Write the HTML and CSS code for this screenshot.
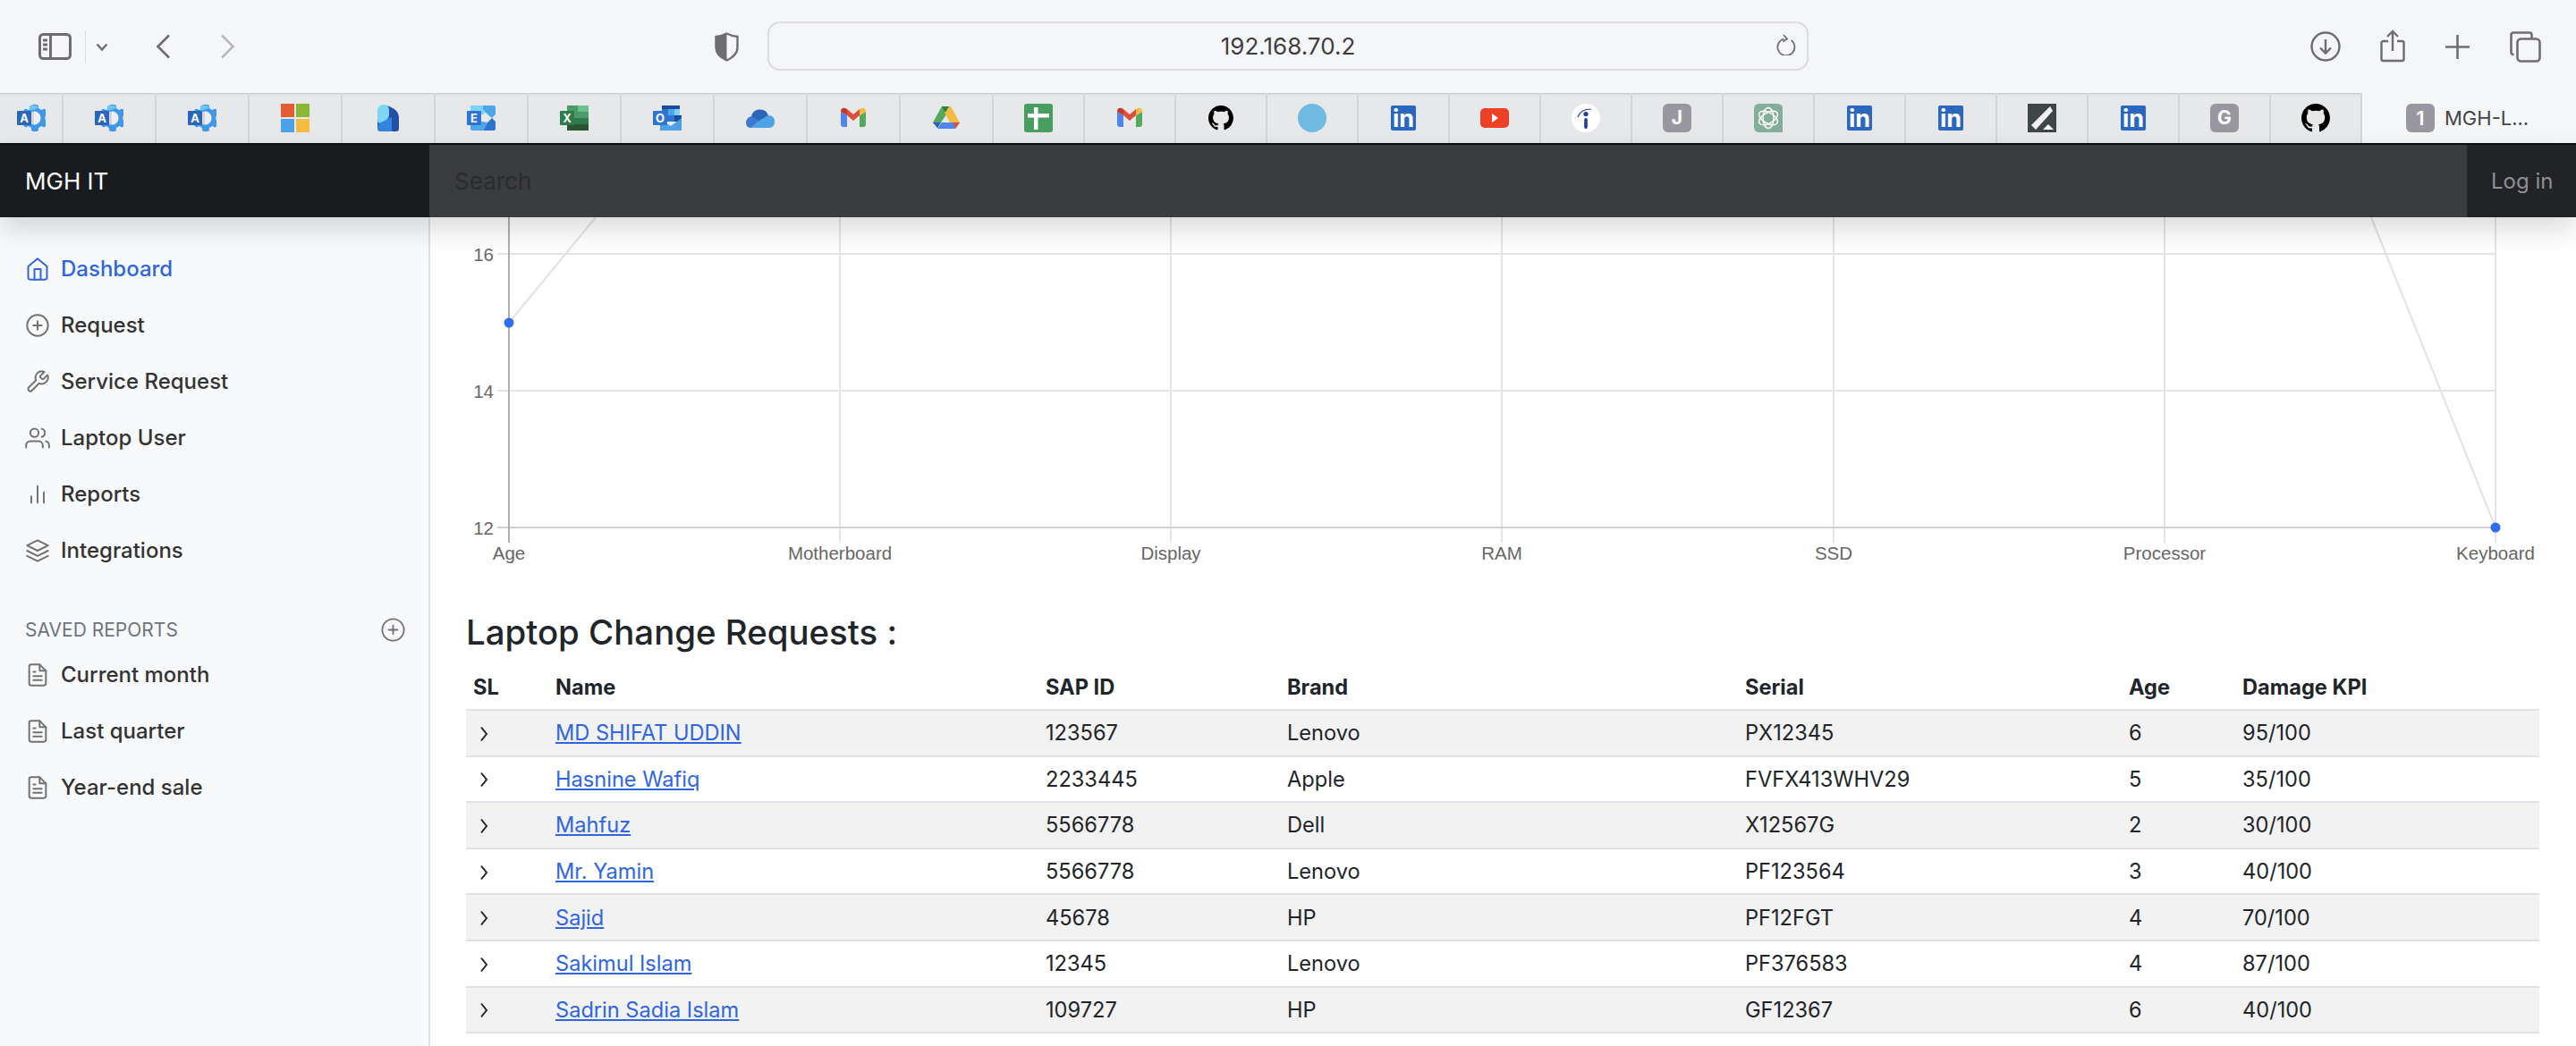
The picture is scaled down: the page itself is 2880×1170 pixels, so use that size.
FILE: index.html
```html
<!DOCTYPE html>
<html>
  <head>
    <meta charset="utf-8" />
    <title>MGH IT</title>
    <link rel="stylesheet" href="styles.css">
  </head>

  <body>
    <!-- favicons used more than once, letters go in at each use -->
    <svg class="defs" width="0" height="0">
      <symbol id="fav-azure" viewBox="0 0 32 32">
        <g fill="#3f97e8">
          <circle cx="20" cy="16" r="11.500" />
          <rect x="16" y="1" width="8" height="30" rx="2" />
          <rect x="16" y="1" width="8" height="30" rx="2" transform="rotate(60 20 16)" />
          <rect x="16" y="1" width="8" height="30" rx="2" transform="rotate(120 20 16)" />
        </g>
        <path d="M14 2h8l2 3-10 3z" fill="#6cc6f5" />
        <circle cx="19" cy="16" r="7.500" fill="#d4d6da" />
        <path d="M19 8.500a7.500 7.500 0 0 1 0 15z" fill="#eceef0" />
        <rect y="8" width="16" height="16" rx="1" fill="#2b66b8" />
      </symbol>
      <symbol id="fav-li" viewBox="0 0 32 32">
        <rect x="2" y="2" width="28" height="28" rx="2" fill="#2b66c0" />
      </symbol>
      <symbol id="fav-gmail" viewBox="0 0 32 32">
        <path d="M2 9v14q0 3 3 3h4V13z" fill="#4e85f0" />
        <path d="M23 13v13h4q3 0 3-3V9z" fill="#57a85f" />
        <path d="M9 13l7 6 7-6V6l-7 6-7-6z" fill="#dd4f3b" />
        <path d="M2 9q0-5 5-4l2 1v7z" fill="#c5392b" />
        <path d="M23 6l2-1q5-1 5 4l-7 4z" fill="#f0bd3f" />
      </symbol>
      <symbol id="fav-github" viewBox="0 0 16 16">
        <path d="M8 0C3.58 0 0 3.58 0 8c0 3.54 2.29 6.53 5.47 7.59.4.07.55-.17.55-.38 0-.19-.01-.82-.01-1.49-2.01.37-2.53-.49-2.69-.94-.09-.23-.48-.94-.82-1.13-.28-.15-.68-.52-.01-.53.63-.01 1.08.58 1.23.82.72 1.21 1.87.87 2.33.66.07-.52.28-.87.51-1.07-1.78-.2-3.64-.89-3.64-3.95 0-.87.31-1.59.82-2.15-.08-.2-.36-1.02.08-2.12 0 0 .67-.21 2.2.82.64-.18 1.32-.27 2-.27.68 0 1.36.09 2 .27 1.53-1.04 2.2-.82 2.2-.82.44 1.1.16 1.92.08 2.12.51.56.82 1.27.82 2.15 0 3.07-1.87 3.75-3.65 3.95.29.25.54.73.54 1.48 0 1.07-.01 1.93-.01 2.2 0 .21.15.46.55.38A8.013 8.013 0 0016 8c0-4.42-3.58-8-8-8z" fill="#000" />
      </symbol>
      <symbol id="ic-doc" viewBox="0 0 24 24">
        <path d="M14 2H6a2 2 0 0 0-2 2v16a2 2 0 0 0 2 2h12a2 2 0 0 0 2-2V8z" />
        <polyline points="14 2 14 8 20 8" />
        <line x1="16" y1="13" x2="8" y2="13" />
        <line x1="16" y1="17" x2="8" y2="17" />
        <polyline points="10 9 9 9 8 9" />
      </symbol>
      <symbol id="ic-chev" viewBox="0 0 10 18">
        <path d="M2 1.500l6 7.500-6 7.500" />
      </symbol>
    </svg>

    <!-- browser toolbar -->
    <div class="toolbar">
      <div class="tb-left">
        <svg class="tb-icon ic-sidebar" viewBox="0 0 37 30"><rect x="1.500" y="1.500" width="34" height="27" rx="4" /><line x1="13.500" y1="1.500" x2="13.500" y2="28.500" /><line x1="5" y1="8" x2="10" y2="8" /><line x1="5" y1="13" x2="10" y2="13" /><line x1="5" y1="18" x2="10" y2="18" /></svg>
        <span class="tb-divider"></span>
        <svg class="tb-icon ic-caret" viewBox="0 0 14 9"><path d="M1.500 1.500l5.500 6 5.500-6" /></svg>
        <svg class="tb-icon ic-back" viewBox="0 0 17 28"><path d="M15 1.500L2.500 14 15 26.500" /></svg>
        <svg class="tb-icon ic-fwd" viewBox="0 0 17 28"><path d="M2 1.500L14.500 14 2 26.500" /></svg>
        <svg class="tb-icon ic-shield" viewBox="0 0 27 33"><path d="M13.500 1.500q6 3 12 3.500v12q0 9-12 14.500Q1.500 26 1.500 17V5q6-.5 12-3.500z" /><path class="solid" d="M13.500 1.500v30Q1.500 26 1.500 17V5q6-.5 12-3.500z" /></svg>
      </div>
      <div class="address">
        <span class="address-text">192.168.70.2</span>
        <svg class="tb-icon ic-reload" viewBox="0 0 22 24"><path d="M16.500 7a9.500 9.500 0 1 1-8-1.500" /><path d="M8 1l4 4.500-5 3" /></svg>
      </div>
      <div class="tb-right">
        <svg class="tb-icon ic-download" viewBox="0 0 34 34"><circle cx="17" cy="17" r="15.500" /><path d="M17 9v15M11 18.500l6 6 6-6" /></svg>
        <svg class="tb-icon ic-share" viewBox="0 0 28 37"><path d="M9 13H3.500a2 2 0 0 0-2 2v18a2 2 0 0 0 2 2h21a2 2 0 0 0 2-2V15a2 2 0 0 0-2-2H19" /><path d="M14 24V2M8 8l6-6 6 6" /></svg>
        <svg class="tb-icon ic-plus" viewBox="0 0 27 27"><path d="M13.500 0v27M0 13.500h27" /></svg>
        <svg class="tb-icon ic-tabs" viewBox="0 0 35 35"><rect x="8.500" y="8.500" width="25" height="25" rx="4" /><path d="M4.500 26h-.500a2.500 2.500 0 0 1-2.500-2.500V4A2.500 2.500 0 0 1 4 1.500h18A2.500 2.500 0 0 1 24.500 4v4" /></svg>
      </div>
    </div>

    <!-- pinned tabs -->
    <div class="tabstrip">
      <div class="tab tab-first"><svg class="fav" viewBox="0 0 32 32"><use href="#fav-azure" /><text x="8" y="21" class="fav-letter" font-size="13">A</text></svg></div>
      <div class="tab tab-wide"><svg class="fav" viewBox="0 0 32 32"><use href="#fav-azure" /><text x="8" y="21" class="fav-letter" font-size="13">A</text></svg></div>
      <div class="tab tab-wide"><svg class="fav" viewBox="0 0 32 32"><use href="#fav-azure" /><text x="8" y="21" class="fav-letter" font-size="13">A</text></svg></div>
      <div class="tab tab-wide">
        <svg class="fav" viewBox="0 0 32 32"><rect width="15" height="15" fill="#e45c33" /><rect x="17" width="15" height="15" fill="#8ab734" /><rect y="17" width="15" height="15" fill="#4aa3ea" /><rect x="17" y="17" width="15" height="15" fill="#f5bc3f" /></svg>
      </div>
      <div class="tab tab-wide">
        <svg class="fav" viewBox="0 0 32 32"><path d="M12 2h2q14 4 14 14v12q0 3-3 3H8q-4 0-4-4V10z" fill="#2450a8" /><path d="M4 27q0-4 4-6l12-6v16H8q-4 0-4-4z" fill="#3284de" /><path d="M4 9q0-8 7-8 6 0 6 7v5q0 3-3 5l-8 4q-2-1-2-4z" fill="#7dd6f5" /></svg>
      </div>
      <div class="tab tab-wide">
        <svg class="fav" viewBox="0 0 32 32"><path d="M4 2h14l5 6-5 4H4z" fill="#7cd2f8" /><path d="M18 2h12q2 0 2 2v8l-4 4-5-4-5-6z" fill="#4da6e8" /><path d="M28 16l4 4v8q0 2-2 2H18l5-9z" fill="#2f74d0" /><path d="M4 20h14l5 1-5 9H6q-2 0-2-2z" fill="#4da6e8" /><rect y="8" width="16" height="16" rx="1" fill="#2f74d0" /><text x="8" y="21" class="fav-letter" font-size="13">E</text></svg>
      </div>
      <div class="tab tab-wide">
        <svg class="fav" viewBox="0 0 32 32"><rect x="8" y="2" width="12" height="7" fill="#4a9b67" /><rect x="20" y="2" width="12" height="7" fill="#68c18a" /><rect x="8" y="9" width="24" height="7" fill="#4a9b67" /><rect x="8" y="16" width="24" height="7" fill="#2f7a4c" /><rect x="8" y="23" width="24" height="7" fill="#295535" /><rect y="8" width="16" height="16" rx="1" fill="#2f7d4b" /><text x="8" y="21" class="fav-letter" font-size="13">X</text></svg>
      </div>
      <div class="tab tab-wide">
        <svg class="fav" viewBox="0 0 32 32"><rect x="10" y="2" width="20" height="4" fill="#1e4a9a" /><rect x="10" y="6" width="7" height="7" fill="#2f74d0" /><rect x="17" y="6" width="7" height="7" fill="#4da6e8" /><rect x="24" y="6" width="6" height="7" fill="#7cd2f8" /><rect x="10" y="13" width="14" height="7" fill="#2f74d0" /><rect x="24" y="13" width="8" height="7" fill="#1e4a9a" /><path d="M8 18l12 7 12-9v14H8z" fill="#4da0e4" /><rect y="8" width="16" height="16" rx="1" fill="#2f74d0" /><text x="8" y="21" class="fav-letter" font-size="13">O</text></svg>
      </div>
      <div class="tab tab-wide">
        <svg class="fav" viewBox="0 0 32 32"><path d="M6 14a10 10 0 0 1 19-1l-10 8z" fill="#2b66b8" /><path d="M6 14q-6 2-6 7 0 6 6 6l9-8z" fill="#3a7ad0" /><path d="M25 13q7 0 7 7 0 7-6 7H6l10-9z" fill="#4da3e6" /></svg>
      </div>
      <div class="tab tab-wide"><svg class="fav"><use href="#fav-gmail" /></svg></div>
      <div class="tab tab-wide">
        <svg class="fav" viewBox="0 0 32 32"><path d="M11 3h10l-5 9-3 1z" fill="#2f7d3f" /><path d="M11 3L1 21l5 6 10-15z" fill="#57a85f" /><path d="M21 3l10 18H20l-6-11 2-2 3-5z" fill="#f0bd3f" /><path d="M11 21h20l-5 7H6z" fill="#4e85f0" /><path d="M1 21h6l3 0-4 6z" fill="#2b5fc0" /><path d="M24 21h7l-5 7z" fill="#dd4f3b" /></svg>
      </div>
      <div class="tab">
        <svg class="fav" viewBox="0 0 32 32"><rect width="32" height="32" rx="3" fill="#489d61" /><path d="M4 11h24v4.500H15.500V29H11V15.500H4z" fill="#fff" /><rect x="11" y="4" width="4.500" height="8" fill="#fff" /></svg>
      </div>
      <div class="tab"><svg class="fav"><use href="#fav-gmail" /></svg></div>
      <div class="tab"><svg class="fav fav-small"><use href="#fav-github" /></svg></div>
      <div class="tab">
        <svg class="fav" viewBox="0 0 32 32"><circle cx="16" cy="16" r="16" fill="#6fbae3" /></svg>
      </div>
      <div class="tab"><svg class="fav" viewBox="0 0 32 32"><use href="#fav-li" /><text x="16" y="26" class="fav-letter" font-size="27">in</text></svg></div>
      <div class="tab">
        <svg class="fav" viewBox="0 0 32 32"><rect y="5" width="32" height="22" rx="5" fill="#ee4027" /><path d="M13 11l7 5-7 5z" fill="#fff" /></svg>
      </div>
      <div class="tab">
        <svg class="fav" viewBox="0 0 32 32"><circle cx="16" cy="16" r="16" fill="#fff" /><path d="M7 15Q10 6 22 6" fill="none" stroke="#2349a3" stroke-width="1.200" /><circle cx="16" cy="11.500" r="2.600" fill="#1f3f99" /><rect x="14.200" y="16" width="3.600" height="12" rx="1.800" fill="#1f3f99" /></svg>
      </div>
      <div class="tab">
        <svg class="fav" viewBox="0 0 32 32"><rect width="32" height="32" rx="6" fill="#98979f" /><text x="16" y="23" class="fav-letter" font-size="21">J</text></svg>
      </div>
      <div class="tab">
        <svg class="fav" viewBox="0 0 32 32"><path d="M6 0h20q6 0 6 6v26H6q-6 0-6-6V6q0-6 6-6z" fill="#85ad9c" /><g fill="none" stroke="#fff" stroke-width="1.400"><ellipse cx="16" cy="16" rx="6" ry="11.500" /><ellipse cx="16" cy="16" rx="6" ry="11.500" transform="rotate(60 16 16)" /><ellipse cx="16" cy="16" rx="6" ry="11.500" transform="rotate(120 16 16)" /></g></svg>
      </div>
      <div class="tab"><svg class="fav" viewBox="0 0 32 32"><use href="#fav-li" /><text x="16" y="26" class="fav-letter" font-size="27">in</text></svg></div>
      <div class="tab"><svg class="fav" viewBox="0 0 32 32"><use href="#fav-li" /><text x="16" y="26" class="fav-letter" font-size="27">in</text></svg></div>
      <div class="tab">
        <svg class="fav" viewBox="0 0 32 32"><rect width="32" height="32" fill="#3f4647" /><path d="M25 3l3 5L9 29l-5-5z" fill="#f2f2f2" /><path d="M23 23l6 6H17z" fill="#fff" /></svg>
      </div>
      <div class="tab"><svg class="fav" viewBox="0 0 32 32"><use href="#fav-li" /><text x="16" y="26" class="fav-letter" font-size="27">in</text></svg></div>
      <div class="tab">
        <svg class="fav" viewBox="0 0 32 32"><rect width="32" height="32" rx="6" fill="#98979f" /><text x="16" y="23" class="fav-letter" font-size="21">G</text></svg>
      </div>
      <div class="tab"><svg class="fav"><use href="#fav-github" /></svg></div>
      <div class="tab-active">
        <span class="tab-badge">1</span>
        <span class="tab-title">MGH-L...</span>
      </div>
    </div>

    <!-- 顶栏 -->
    <header class="topbar">
      <a class="brand">MGH IT</a>
      <div class="search"><span>Search</span></div>
      <a class="login">Log in</a>
    </header>

    <div class="layout">
      <nav class="sidebar">
        <a class="nav-link active">
          <svg class="nav-icon" viewBox="0 0 24 24"><path d="M3 9.500L12 2l9 7.500V20a2 2 0 0 1-2 2H5a2 2 0 0 1-2-2z" /><polyline points="9 22 9 12 15 12 15 22" /></svg>
          Dashboard
        </a>
        <a class="nav-link">
          <svg class="nav-icon" viewBox="0 0 24 24"><circle cx="12" cy="12" r="10" /><line x1="12" y1="8" x2="12" y2="16" /><line x1="8" y1="12" x2="16" y2="12" /></svg>
          Request
        </a>
        <a class="nav-link">
          <svg class="nav-icon" viewBox="0 0 24 24"><path d="M14.700 6.300a1 1 0 0 0 0 1.400l1.600 1.600a1 1 0 0 0 1.400 0l3.770-3.770a6 6 0 0 1-7.940 7.940l-6.910 6.910a2.120 2.120 0 0 1-3-3l6.910-6.910a6 6 0 0 1 7.940-7.940l-3.760 3.760z" /></svg>
          Service Request
        </a>
        <a class="nav-link">
          <svg class="nav-icon" viewBox="0 0 24 24"><path d="M17 21v-2a4 4 0 0 0-4-4H5a4 4 0 0 0-4 4v2" /><circle cx="9" cy="7" r="4" /><path d="M23 21v-2a4 4 0 0 0-3-3.870" /><path d="M16 3.130a4 4 0 0 1 0 7.750" /></svg>
          Laptop User
        </a>
        <a class="nav-link">
          <svg class="nav-icon" viewBox="0 0 24 24"><line x1="18" y1="20" x2="18" y2="10" /><line x1="12" y1="20" x2="12" y2="4" /><line x1="6" y1="20" x2="6" y2="14" /></svg>
          Reports
        </a>
        <a class="nav-link">
          <svg class="nav-icon" viewBox="0 0 24 24"><polygon points="12 2 2 7 12 12 22 7 12 2" /><polyline points="2 17 12 22 22 17" /><polyline points="2 12 12 17 22 12" /></svg>
          Integrations
        </a>

        <h6 class="sidebar-heading">
          <span>Saved reports</span>
          <svg class="heading-icon" viewBox="0 0 24 24"><circle cx="12" cy="12" r="10" /><line x1="12" y1="8" x2="12" y2="16" /><line x1="8" y1="12" x2="16" y2="12" /></svg>
        </h6>

        <a class="nav-link"><svg class="nav-icon"><use href="#ic-doc" /></svg>Current month</a>
        <a class="nav-link"><svg class="nav-icon"><use href="#ic-doc" /></svg>Last quarter</a>
        <a class="nav-link"><svg class="nav-icon"><use href="#ic-doc" /></svg>Year-end sale</a>
      </nav>

      <main class="content">
        <!-- viewBox keeps the page's own coordinates: the canvas sits at 481,243 -->
        <svg class="chart" viewBox="481 243 2399 400">
          <g class="grid">
            <line x1="939" y1="243" x2="939" y2="607" />
            <line x1="1309" y1="243" x2="1309" y2="607" />
            <line x1="1679" y1="243" x2="1679" y2="607" />
            <line x1="2050" y1="243" x2="2050" y2="607" />
            <line x1="2420" y1="243" x2="2420" y2="607" />
            <line x1="2790" y1="243" x2="2790" y2="607" />
            <line x1="556" y1="284" x2="2790" y2="284" />
            <line x1="556" y1="437" x2="2790" y2="437" />
          </g>
          <line class="axis-x" x1="556" y1="590" x2="2790" y2="590" />
          <line class="axis-y" x1="569" y1="243" x2="569" y2="607" />
          <polyline class="series" points="569,361 666,243" />
          <polyline class="series" points="2651,243 2790,590" />
          <circle class="point" cx="569" cy="361" r="5.500" />
          <circle class="point" cx="2790" cy="590" r="5.500" />
          <g class="y-labels">
            <text x="552" y="292">16</text>
            <text x="552" y="445">14</text>
            <text x="552" y="598">12</text>
          </g>
          <g class="x-labels">
            <text x="569" y="626">Age</text>
            <text x="939" y="626">Motherboard</text>
            <text x="1309" y="626">Display</text>
            <text x="1679" y="626">RAM</text>
            <text x="2050" y="626">SSD</text>
            <text x="2420" y="626">Processor</text>
            <text x="2790" y="626">Keyboard</text>
          </g>
        </svg>

        <section class="requests">
          <h2>Laptop Change Requests :</h2>
          <table class="req-table">
            <colgroup>
              <col class="col-sl" /><col class="col-name" /><col class="col-sap" /><col class="col-brand" /><col class="col-serial" /><col class="col-age" /><col class="col-kpi" />
            </colgroup>
            <thead>
              <tr><th>SL</th><th>Name</th><th>SAP ID</th><th>Brand</th><th>Serial</th><th>Age</th><th>Damage KPI</th></tr>
            </thead>
            <tbody>
              <tr><td><svg class="chev"><use href="#ic-chev" /></svg></td><td><a href="#">MD SHIFAT UDDIN</a></td><td>123567</td><td>Lenovo</td><td>PX12345</td><td>6</td><td>95/100</td></tr>
              <tr><td><svg class="chev"><use href="#ic-chev" /></svg></td><td><a href="#">Hasnine Wafiq</a></td><td>2233445</td><td>Apple</td><td>FVFX413WHV29</td><td>5</td><td>35/100</td></tr>
              <tr><td><svg class="chev"><use href="#ic-chev" /></svg></td><td><a href="#">Mahfuz</a></td><td>5566778</td><td>Dell</td><td>X12567G</td><td>2</td><td>30/100</td></tr>
              <tr><td><svg class="chev"><use href="#ic-chev" /></svg></td><td><a href="#">Mr. Yamin</a></td><td>5566778</td><td>Lenovo</td><td>PF123564</td><td>3</td><td>40/100</td></tr>
              <tr><td><svg class="chev"><use href="#ic-chev" /></svg></td><td><a href="#">Sajid</a></td><td>45678</td><td>HP</td><td>PF12FGT</td><td>4</td><td>70/100</td></tr>
              <tr><td><svg class="chev"><use href="#ic-chev" /></svg></td><td><a href="#">Sakimul Islam</a></td><td>12345</td><td>Lenovo</td><td>PF376583</td><td>4</td><td>87/100</td></tr>
              <tr><td><svg class="chev"><use href="#ic-chev" /></svg></td><td><a href="#">Sadrin Sadia Islam</a></td><td>109727</td><td>HP</td><td>GF12367</td><td>6</td><td>40/100</td></tr>
            </tbody>
          </table>
        </section>
      </main>
    </div>
  </body>
</html>
```

FILE: styles.css
```css
* {
  box-sizing: border-box;
}

body {
  margin: 0;
  height: 1170px;
  overflow: hidden;
  background: #fff;
  font-family: Inter, "Noto Sans", sans-serif;
  color: #212529;
}

.defs {
  position: absolute;
}

/* 浏览器工具栏 */
.toolbar {
  display: flex;
  align-items: center;
  height: 104px;
  background: #f5f6f8;
}

.tb-left {
  display: flex;
  align-items: center;
  width: 858px;
  padding-left: 43px;
}

.tb-icon {
  display: block;
  flex: none;
  fill: none;
  stroke: #6e6e70;
  stroke-width: 3;
}

.ic-sidebar { width: 37px; height: 30px; }
.tb-divider { width: 1px; height: 37px; margin-left: 15px; background: #dcdcde; }
.ic-caret { width: 14px; height: 9px; margin-left: 11px; stroke-width: 2.4; }
.ic-back { width: 17px; height: 28px; margin-left: 53px; stroke-width: 2.6; }
.ic-fwd { width: 17px; height: 28px; margin-left: 55px; stroke: #b8b8ba; stroke-width: 2.6; }
.ic-shield { width: 27px; height: 33px; margin-left: 536px; stroke-width: 2.4; }
.ic-shield .solid { fill: #6e6e70; stroke: none; }

.address {
  position: relative;
  display: flex;
  align-items: center;
  justify-content: center;
  width: 1164px;
  height: 55px;
  margin-top: -1px;
  border: 2px solid #dcdcdf;
  border-radius: 14px;
}

.address-text {
  font-size: 26px;
  color: #3e3e40;
}

/* over the bar, the url stays centred */
.ic-reload {
  position: absolute;
  right: 12px;
  top: 12px;
  width: 22px;
  height: 24px;
  stroke-width: 1.8;
}

.tb-right {
  display: flex;
  align-items: center;
  padding-left: 561px;
}

.ic-download { width: 34px; height: 34px; stroke-width: 2.4; }
.ic-share { width: 28px; height: 37px; margin-left: 44px; margin-top: -2px; stroke-width: 2.4; }
.ic-plus { width: 27px; height: 27px; margin-left: 45px; stroke-width: 2.6; }
.ic-tabs { width: 35px; height: 35px; margin-left: 45px; stroke-width: 2.6; }

/* 固定标签 */
.tabstrip {
  display: flex;
  height: 56px;
  background: #e7e8ea;
  box-shadow: inset 0 3px 2px -2px #bfc0c2;
}

.tab {
  display: flex;
  align-items: center;
  justify-content: center;
  flex: none;
  width: 102px;
  height: 100%;
  border-right: 2px solid #d4d5d7;
}

.tab-wide {
  width: 104px;
}

.tab-first {
  width: 71px;
}

.fav {
  display: block;
  width: 32px;
  height: 32px;
}

.fav-small {
  width: 28px;
  height: 28px;
}

.fav-letter {
  font-family: Inter, sans-serif;
  font-weight: 700;
  fill: #fff;
  text-anchor: middle;
}

.tab-active {
  display: flex;
  align-items: center;
  flex: 1;
  padding-left: 49px;
  background: #f5f6f8;
}

.tab-badge {
  display: flex;
  align-items: center;
  justify-content: center;
  width: 32px;
  height: 32px;
  border-radius: 6px;
  background: #98979f;
  color: #fff;
  font-size: 22px;
  font-weight: 600;
}

.tab-title {
  margin-left: 11px;
  font-size: 22px;
  color: #444;
}

/* 顶栏 */
.topbar {
  position: relative;
  z-index: 2;
  display: flex;
  height: 83px;
  border-top: 2px solid #0e0f11;
  box-shadow: 0 14px 30px rgba(0, 0, 0, 0.14);
}

.brand {
  display: flex;
  align-items: center;
  width: 480px;
  padding-left: 28px;
  background: #191c1f;
  color: #fff;
  font-size: 26px;
}

.search {
  display: flex;
  align-items: center;
  flex: 1;
  padding-left: 28px;
  background: #3b3c40;
  color: #2a2b2e;
  font-size: 26px;
}

.login {
  display: flex;
  align-items: center;
  width: 122px;
  padding-left: 27px;
  background: #212327;
  color: #8e9094;
  font-size: 24px;
}

.layout {
  display: flex;
  height: 927px;
}

.sidebar {
  flex: none;
  width: 481px;
  padding-top: 26px;
  background: #f8f9fb;
  border-right: 2px solid #e0e1e4;
}

.nav-link {
  display: flex;
  align-items: center;
  gap: 12px;
  height: 63px;
  padding-left: 28px;
  font-size: 24px;
  font-weight: 500;
  color: #333;
}

.nav-link.active {
  color: #2f66d8;
}

.nav-icon {
  flex: none;
  width: 28px;
  height: 28px;
  fill: none;
  stroke: #727272;
  stroke-width: 1.700;
  stroke-linecap: round;
  stroke-linejoin: round;
}

.nav-link.active .nav-icon {
  stroke: #2f66d8;
}

.sidebar-heading {
  display: flex;
  align-items: center;
  justify-content: space-between;
  height: 32px;
  margin: 41px 0 3px;
  padding: 0 25px 0 28px;
  font-size: 21px;
  font-weight: 400;
  text-transform: uppercase;
  color: #6c757d;
}

.heading-icon {
  flex: none;
  width: 29px;
  height: 29px;
  fill: none;
  stroke: #727272;
  stroke-width: 1.500;
  stroke-linecap: round;
}

.content {
  flex: 1;
  min-width: 0;
}

/* 折线图 */
.chart {
  display: block;
  width: 2399px;
  height: 400px;
  font-family: "Liberation Sans", Arial, sans-serif;
  font-size: 20.500px;
}

.grid line {
  stroke: #e4e4e4;
  stroke-width: 2;
}

.axis-x {
  stroke: #cfcfcf;
  stroke-width: 2;
}

.axis-y {
  stroke: #aeaeae;
  stroke-width: 2;
}

.series {
  fill: none;
  stroke: #e2e2e2;
  stroke-width: 2;
}

.point {
  fill: #2f6fed;
}

.y-labels text {
  fill: #666;
  text-anchor: end;
}

.x-labels text {
  fill: #666;
  text-anchor: middle;
}

.requests {
  padding: 0 41px 0 40px;
}

.requests h2 {
  margin: 40px 0 0;
  height: 61px;
  font-size: 38.400px;
  line-height: 48px;
  font-weight: 500;
  color: #212529;
}

.req-table {
  width: 2318px;
  table-layout: fixed;
  border-collapse: collapse;
  font-size: 23.600px;
  color: #212529;
}

.col-sl { width: 92px; }
.col-name { width: 548px; }
.col-sap { width: 270px; }
.col-brand { width: 512px; }
.col-serial { width: 429px; }
.col-age { width: 127px; }
.col-kpi { width: 340px; }

.req-table th {
  height: 50px;
  padding: 0 8px;
  text-align: left;
  font-weight: 700;
  border-bottom: 2px solid #dee2e6;
}

.req-table td {
  height: 51.600px;
  padding: 0 8px;
  border-bottom: 2px solid #dee2e6;
}

.req-table tbody tr:nth-child(odd) td {
  background: #f2f2f2;
}

.req-table a {
  color: #2f66e0;
}

.chev {
  display: block;
  width: 10px;
  height: 18px;
  margin: 2px 0 0 7px;
  fill: none;
  stroke: #212529;
  stroke-width: 2;
}
```
